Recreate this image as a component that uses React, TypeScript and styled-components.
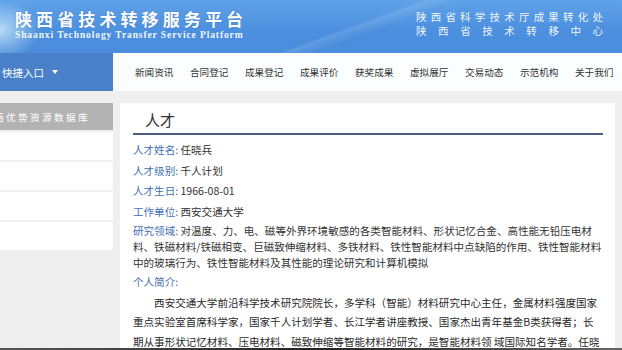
import React from "react";
import styled, { createGlobalStyle } from "styled-components";

const GlobalStyle = createGlobalStyle`
    body {
        margin: 0;
        background: #efefef;
        font-family: "Noto Sans CJK SC", "Noto Sans", sans-serif;
    }
`;

const navItems = ["新闻资讯", "合同登记", "成果登记", "成果评价", "获奖成果", "虚拟展厅", "交易动态", "示范机构", "关于我们"];

const fields = [
    { label: "人才姓名", value: "任晓兵" },
    { label: "人才级别", value: "千人计划" },
    { label: "人才生日", value: "1966-08-01" },
    { label: "工作单位", value: "西安交通大学" },
];

const research =
    "对温度、力、电、磁等外界环境敏感的各类智能材料、形状记忆合金、高性能无铅压电材料、铁磁材料/铁磁相变、巨磁致伸缩材料、多铁材料、铁性智能材料中点缺陷的作用、铁性智能材料中的玻璃行为、铁性智能材料及其性能的理论研究和计算机模拟";

const intro =
    "西安交通大学前沿科学技术研究院院长，多学科（智能）材料研究中心主任，金属材料强度国家重点实验室首席科学家，国家千人计划学者、长江学者讲座教授、国家杰出青年基金B类获得者；长期从事形状记忆材料、压电材料、磁致伸缩等智能材料的研究，是智能材料领 域国际知名学者。任晓";

const App = () => {
    return (
        <>
            <GlobalStyle />
            <Page>
                <Banner>
                    <Brand>
                        <BrandTitle>陕西省技术转移服务平台</BrandTitle>
                        <BrandSub>Shaanxi Technology Transfer Service Platform</BrandSub>
                    </Brand>
                    <Orgs>
                        <OrgLine>
                            {"陕西省科学技术厅成果转化处".split("").map((c, i) => (
                                <span key={i}>{c}</span>
                            ))}
                        </OrgLine>
                        <OrgLine>
                            {"陕西省技术转移中心".split("").map((c, i) => (
                                <span key={i}>{c}</span>
                            ))}
                        </OrgLine>
                    </Orgs>
                </Banner>

                <NavBar>
                    <QuickEntry>
                        快捷入口
                        <Caret />
                    </QuickEntry>
                    <NavList>
                        {navItems.map((n) => (
                            <NavItem key={n}>{n}</NavItem>
                        ))}
                    </NavList>
                </NavBar>

                <Main>
                    <Sidebar>
                        <SideHead>
                            <SideHeadText>西优势资源数据库</SideHeadText>
                        </SideHead>
                        <SideRow />
                        <SideRow />
                        <SideRow />
                        <SideRow />
                    </Sidebar>

                    <Panel>
                        <PanelTitle>人才</PanelTitle>
                        <Fields>
                            {fields.map((f) => (
                                <Field key={f.label}>
                                    <Label>{f.label}: </Label>
                                    {f.value}
                                </Field>
                            ))}
                        </Fields>
                        <Research>
                            <Label>研究领域: </Label>
                            {research}
                        </Research>
                        <Field>
                            <Label>个人简介:</Label>
                        </Field>
                        <Intro>{intro}</Intro>
                    </Panel>
                </Main>
                <FooterStrip />
            </Page>
        </>
    );
};

const Page = styled.div`
    width: 622px;
    height: 350px;
    overflow: hidden;
    display: flex;
    flex-direction: column;
`;

const Banner = styled.div`
    height: 53px;
    flex-shrink: 0;
    display: flex;
    justify-content: space-between;
    padding: 8px 19px 0 15px;
    box-sizing: border-box;
    background:
        radial-gradient(ellipse 40px 30px at 0px 30px, rgba(230, 250, 255, 0.7), rgba(230, 250, 255, 0) 100%),
        linear-gradient(160deg, rgba(255, 255, 255, 0) 55%, rgba(255, 255, 255, 0.12) 56%, rgba(255, 255, 255, 0) 60%),
        linear-gradient(180deg, #5fa2e8 0%, #4b8fde 60%, #4a8cdb 100%);
    color: #fff;
`;

const Brand = styled.div`
    display: flex;
    flex-direction: column;
`;

const BrandTitle = styled.div`
    font-family: "Noto Sans CJK SC", sans-serif;
    font-weight: 700;
    font-size: 17px;
    line-height: 22px;
    letter-spacing: 4.1px;
    text-shadow: 0 0 1px rgba(30, 70, 140, 0.5);
`;

const BrandSub = styled.div`
    font-family: "Liberation Serif", serif;
    font-weight: 700;
    font-size: 9.5px;
    line-height: 10px;
    letter-spacing: 0.9px;
    opacity: 0.92;
`;

const Orgs = styled.div`
    width: 187px;
    margin-top: 3px;
    display: flex;
    flex-direction: column;
    gap: 2px;
`;

const OrgLine = styled.div`
    display: flex;
    justify-content: space-between;
    font-family: "Noto Sans CJK SC", serif;
    font-size: 10.5px;
    line-height: 12px;
    color: rgba(255, 255, 255, 0.92);
`;

const NavBar = styled.div`
    height: 38px;
    flex-shrink: 0;
    display: flex;
    background: #fbfefe;
`;

const QuickEntry = styled.div`
    width: 113px;
    display: flex;
    align-items: center;
    padding-left: 2px;
    box-sizing: border-box;
    background: #4a80c7;
    color: #fff;
    font-size: 10.5px;
`;

const Caret = styled.span`
    margin-left: 8px;
    width: 0;
    height: 0;
    border-left: 3px solid transparent;
    border-right: 3px solid transparent;
    border-top: 4px solid #fff;
`;

const NavList = styled.div`
    display: flex;
    align-items: center;
    gap: 17px;
    padding-left: 22px;
`;

const NavItem = styled.span`
    width: 38px;
    font-size: 9.6px;
    color: #333;
    white-space: nowrap;
`;

const Main = styled.div`
    height: 257px;
    flex-shrink: 0;
    display: flex;
    gap: 7px;
    padding-top: 12px;
    box-sizing: border-box;
    overflow: hidden;
`;

const Sidebar = styled.div`
    width: 113px;
    flex-shrink: 0;
    display: flex;
    flex-direction: column;
`;

const SideHead = styled.div`
    height: 27px;
    display: flex;
    align-items: center;
    background: #b3b3b3;
    overflow: hidden;
`;

const SideHeadText = styled.span`
    margin-left: -6px;
    color: #fff;
    font-size: 9.6px;
    letter-spacing: 2.4px;
    white-space: nowrap;
`;

const SideRow = styled.div`
    height: 28px;
    margin-top: 2px;
    background: #fff;
`;

const Panel = styled.div`
    width: 495px;
    flex-shrink: 0;
    background: #fff;
    padding: 0 12px 0 13px;
    box-sizing: border-box;
    color: #333;
    font-size: 10.55px;
`;

const PanelTitle = styled.div`
    padding: 7px 0 3px 12px;
    font-size: 15px;
    line-height: 20px;
    color: #333;
    border-bottom: 2px solid #4b5d80;
`;

const Fields = styled.div`
    margin-top: 5px;
`;

const Field = styled.div`
    line-height: 20.5px;
    white-space: nowrap;
`;

const Label = styled.span`
    color: #3f6fb4;
`;

const Research = styled.div`
    margin-top: 1px;
    line-height: 16px;
    margin-bottom: 1px;
`;

const Intro = styled.p`
    margin: 0;
    text-indent: 2em;
    line-height: 19.5px;
    color: #2a2a2a;
`;

const FooterStrip = styled.div`
    height: 3px;
    flex-shrink: 0;
    background: linear-gradient(90deg, #555 0%, #3a3a3a 30%, #222 50%, #4a4a4a 80%, #666 100%);
`;

export default App;
